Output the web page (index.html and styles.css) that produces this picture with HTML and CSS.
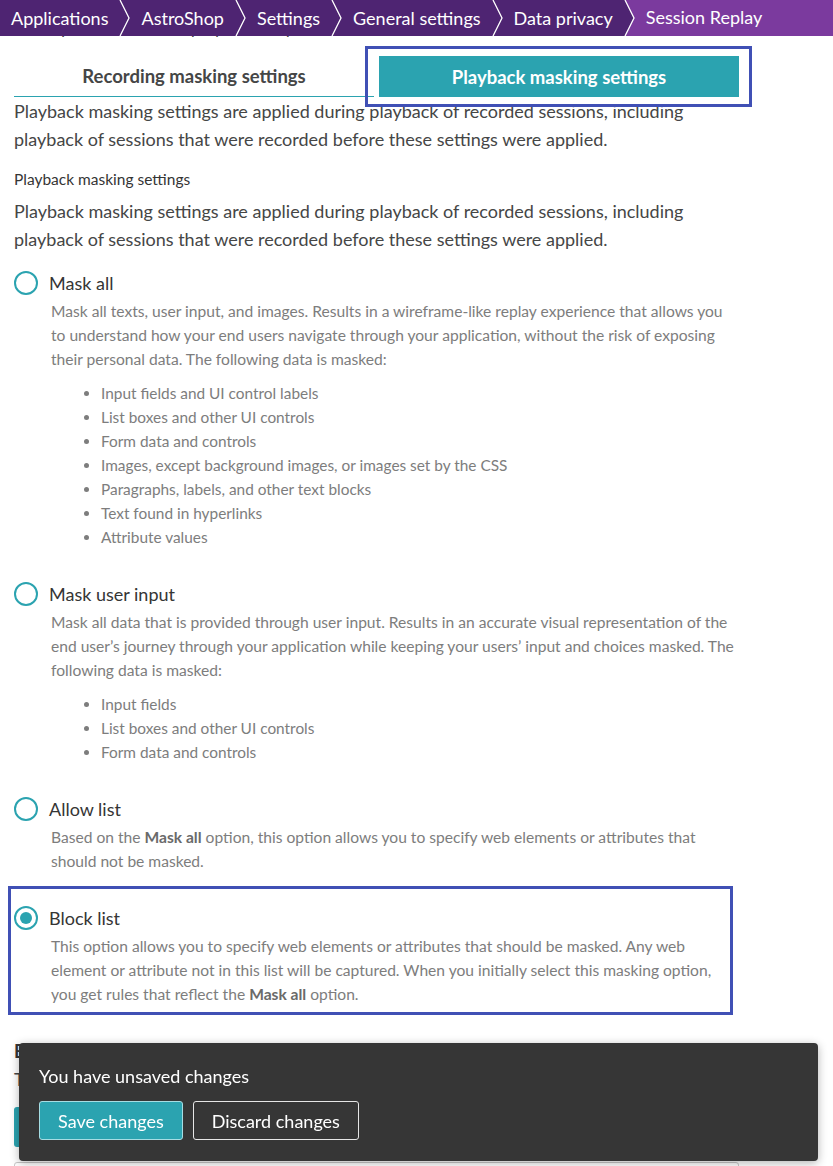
FILE: index.html
```html
<!DOCTYPE html>
<html lang="en">
<head>
<meta charset="utf-8">
<title>Session Replay – Data privacy</title>
<link rel="stylesheet" href="styles.css">
</head>
<body>
<nav class="crumbs">
  <span class="crumb">Applications</span>
  <svg class="sep" viewBox="0 0 12 36" width="12" height="36"><path d="M1 0 L10 18 L1 36" fill="none" stroke="#fff" stroke-width="1.3"/></svg>
  <span class="crumb">AstroShop</span>
  <svg class="sep" viewBox="0 0 12 36" width="12" height="36"><path d="M1 0 L10 18 L1 36" fill="none" stroke="#fff" stroke-width="1.3"/></svg>
  <span class="crumb">Settings</span>
  <svg class="sep" viewBox="0 0 12 36" width="12" height="36"><path d="M1 0 L10 18 L1 36" fill="none" stroke="#fff" stroke-width="1.3"/></svg>
  <span class="crumb">General settings</span>
  <svg class="sep" viewBox="0 0 12 36" width="12" height="36"><path d="M1 0 L10 18 L1 36" fill="none" stroke="#fff" stroke-width="1.3"/></svg>
  <span class="crumb">Data privacy</span>
  <svg class="sep" viewBox="0 0 12 36" width="12" height="36"><polygon points="1,0 12,0 12,36 1,36 10,18" fill="#7b3a9e"/><path d="M1 0 L10 18 L1 36" fill="none" stroke="#fff" stroke-width="1.3"/></svg>
  <span class="crumb crumb-current">Session Replay</span>
</nav>

<main class="main">
  <p class="ghost">Mask personal data in playback of your recorded user sessions</p>

  <div class="tabs">
    <div class="tab">Recording masking settings</div>
    <div class="tab tab-active">Playback masking settings</div>
  </div>

  <p class="lead">Playback masking settings are applied during playback of recorded sessions, including playback of sessions that were recorded before these settings were applied.</p>

  <div class="label">Playback masking settings</div>
  <p class="lead">Playback masking settings are applied during playback of recorded sessions, including playback of sessions that were recorded before these settings were applied.</p>

  <div class="options">
    <div class="opt">
      <div class="opt-head"><span class="radio"></span><span class="opt-title">Mask all</span></div>
      <div class="opt-body">
        <p class="desc">Mask all texts, user input, and images. Results in a wireframe-like replay experience that allows you to understand how your end users navigate through your application, without the risk of exposing their personal data. The following data is masked:</p>
        <ul class="bullets">
          <li>Input fields and UI control labels</li>
          <li>List boxes and other UI controls</li>
          <li>Form data and controls</li>
          <li>Images, except background images, or images set by the CSS</li>
          <li>Paragraphs, labels, and other text blocks</li>
          <li>Text found in hyperlinks</li>
          <li>Attribute values</li>
        </ul>
      </div>
    </div>

    <div class="opt">
      <div class="opt-head"><span class="radio"></span><span class="opt-title">Mask user input</span></div>
      <div class="opt-body">
        <p class="desc">Mask all data that is provided through user input. Results in an accurate visual representation of the end user’s journey through your application while keeping your users’ input and choices masked. The following data is masked:</p>
        <ul class="bullets">
          <li>Input fields</li>
          <li>List boxes and other UI controls</li>
          <li>Form data and controls</li>
        </ul>
      </div>
    </div>

    <div class="opt">
      <div class="opt-head"><span class="radio"></span><span class="opt-title">Allow list</span></div>
      <div class="opt-body">
        <p class="desc">Based on the <b>Mask all</b> option, this option allows you to specify web elements or attributes that should not be masked.</p>
      </div>
    </div>

    <div class="opt opt-highlight">
      <div class="opt-head"><span class="radio radio-on"></span><span class="opt-title">Block list</span></div>
      <div class="opt-body">
        <p class="desc">This option allows you to specify web elements or attributes that should be masked. Any web element or attribute not in this list will be captured. When you initially select this masking option, you get rules that reflect the <b>Mask all</b> option.</p>
      </div>
    </div>
  </div>

  <h3 class="sub">Block list rules</h3>
  <p class="lead">There are no rules defined for this list yet.</p>
  <button class="add-btn">Add rule</button>
  <div class="field"></div>
</main>

<div class="toast">
  <div class="toast-text">You have unsaved changes</div>
  <div class="toast-actions">
    <button class="btn btn-save">Save changes</button>
    <button class="btn btn-discard">Discard changes</button>
  </div>
</div>
</body>
</html>
```
FILE: styles.css
```css
*, *::before, *::after { box-sizing: border-box; }

body {
  margin: 0;
  font-family: Lato, "Noto Sans", sans-serif;
  color: #454646;
  background: #fff;
}

.crumbs {
  position: fixed;
  top: 0;
  left: 0;
  right: 0;
  height: 36px;
  display: flex;
  align-items: center;
  background: #4e2472;
  z-index: 10;
  padding-left: 11px;
}

.crumb {
  color: #fff;
  font-size: 18px;
  line-height: 35px;
  white-space: nowrap;
}

.sep { flex: none; margin: 0 10px 0 11px; }

.crumb-current {
  flex: 1;
  background: #7b3a9e;
  margin-left: -10px;
  padding-left: 10px;
  align-self: stretch;
}

.main {
  width: 753px;
  padding: 0 14px;
}

.ghost {
  margin: 13px 0 0;
  font-size: 18px;
  line-height: 28px;
  color: #454646;
}

.tabs {
  margin-top: 15px;
  display: grid;
  grid-template-columns: 360px 360px;
  gap: 5px;
}

.tab {
  height: 41px;
  display: flex;
  align-items: center;
  justify-content: center;
  font-size: 18.5px;
  font-weight: 700;
  color: #454646;
  border-bottom: 1px solid #2ba3b0;
}

.tab-active {
  position: relative;
  background: #2ba3b0;
  color: #fff;
  border-bottom: none;
}

.tab-active::after {
  content: "";
  position: absolute;
  top: -10px;
  bottom: -10px;
  left: -14px;
  right: -13px;
  border: 3px solid #4050b5;
}

.lead {
  margin: 0;
  font-size: 18px;
  line-height: 28px;
  color: #454646;
}

.label {
  margin: 16px 0 8px;
  font-size: 15.5px;
  line-height: 20px;
  color: #353535;
}

.options { margin-top: 18px; }

.opt + .opt { margin-top: 33px; }

.opt-head {
  display: flex;
  align-items: center;
  gap: 11px;
  height: 24px;
}

.radio {
  width: 24px;
  height: 24px;
  border-radius: 50%;
  border: 2px solid #2ba3b0;
  flex: none;
  display: flex;
  align-items: center;
  justify-content: center;
}

.radio-on::before {
  content: "";
  width: 12px;
  height: 12px;
  border-radius: 50%;
  background: #2ba3b0;
}

.opt-title {
  font-size: 18px;
  color: #353535;
}

.opt-body { margin: 4px 0 0 37px; }

.desc {
  margin: 0;
  font-size: 15.6px;
  line-height: 24px;
  color: #7d7d7d;
}

.desc b { font-weight: 700; color: #6a6a6a; }

.bullets {
  margin: 10px 0 0;
  padding-left: 50px;
  font-size: 15.4px;
  line-height: 24px;
  color: #7d7d7d;
}

.opt-highlight { position: relative; }

.opt-highlight::after {
  content: "";
  position: absolute;
  top: -20px;
  left: -6px;
  width: 725px;
  height: 129px;
  border: 3px solid #4050b5;
}

.sub {
  margin: 31px 0 0;
  font-size: 18px;
  line-height: 28px;
  font-weight: 700;
  color: #353535;
}

.add-btn {
  margin-top: 14px;
  height: 40px;
  padding: 0 20px;
  border: none;
  border-radius: 3px;
  background: #2ba3b0;
  color: #fff;
  font-family: inherit;
  font-size: 18px;
}

.field {
  margin-top: 15px;
  height: 34px;
  border: 1px solid #c8c8c8;
  border-radius: 3px;
}

.toast {
  position: fixed;
  left: 19px;
  bottom: 5px;
  width: 799px;
  height: 118px;
  padding: 20px;
  background: #363636;
  border-radius: 4px;
  box-shadow: 0 2px 10px rgba(0, 0, 0, 0.3);
  z-index: 20;
}

.toast-text {
  color: #fff;
  font-size: 18px;
  line-height: 27px;
}

.toast-actions {
  margin-top: 11px;
  display: flex;
  gap: 10px;
}

.btn {
  height: 39px;
  padding: 0 18px;
  border-radius: 3px;
  font-family: inherit;
  font-size: 18px;
  color: #fff;
  background: transparent;
  border: 1px solid #e6e6e6;
}

.btn-save {
  background: #2ba3b0;
  border-color: #a6dde3;
}
```
